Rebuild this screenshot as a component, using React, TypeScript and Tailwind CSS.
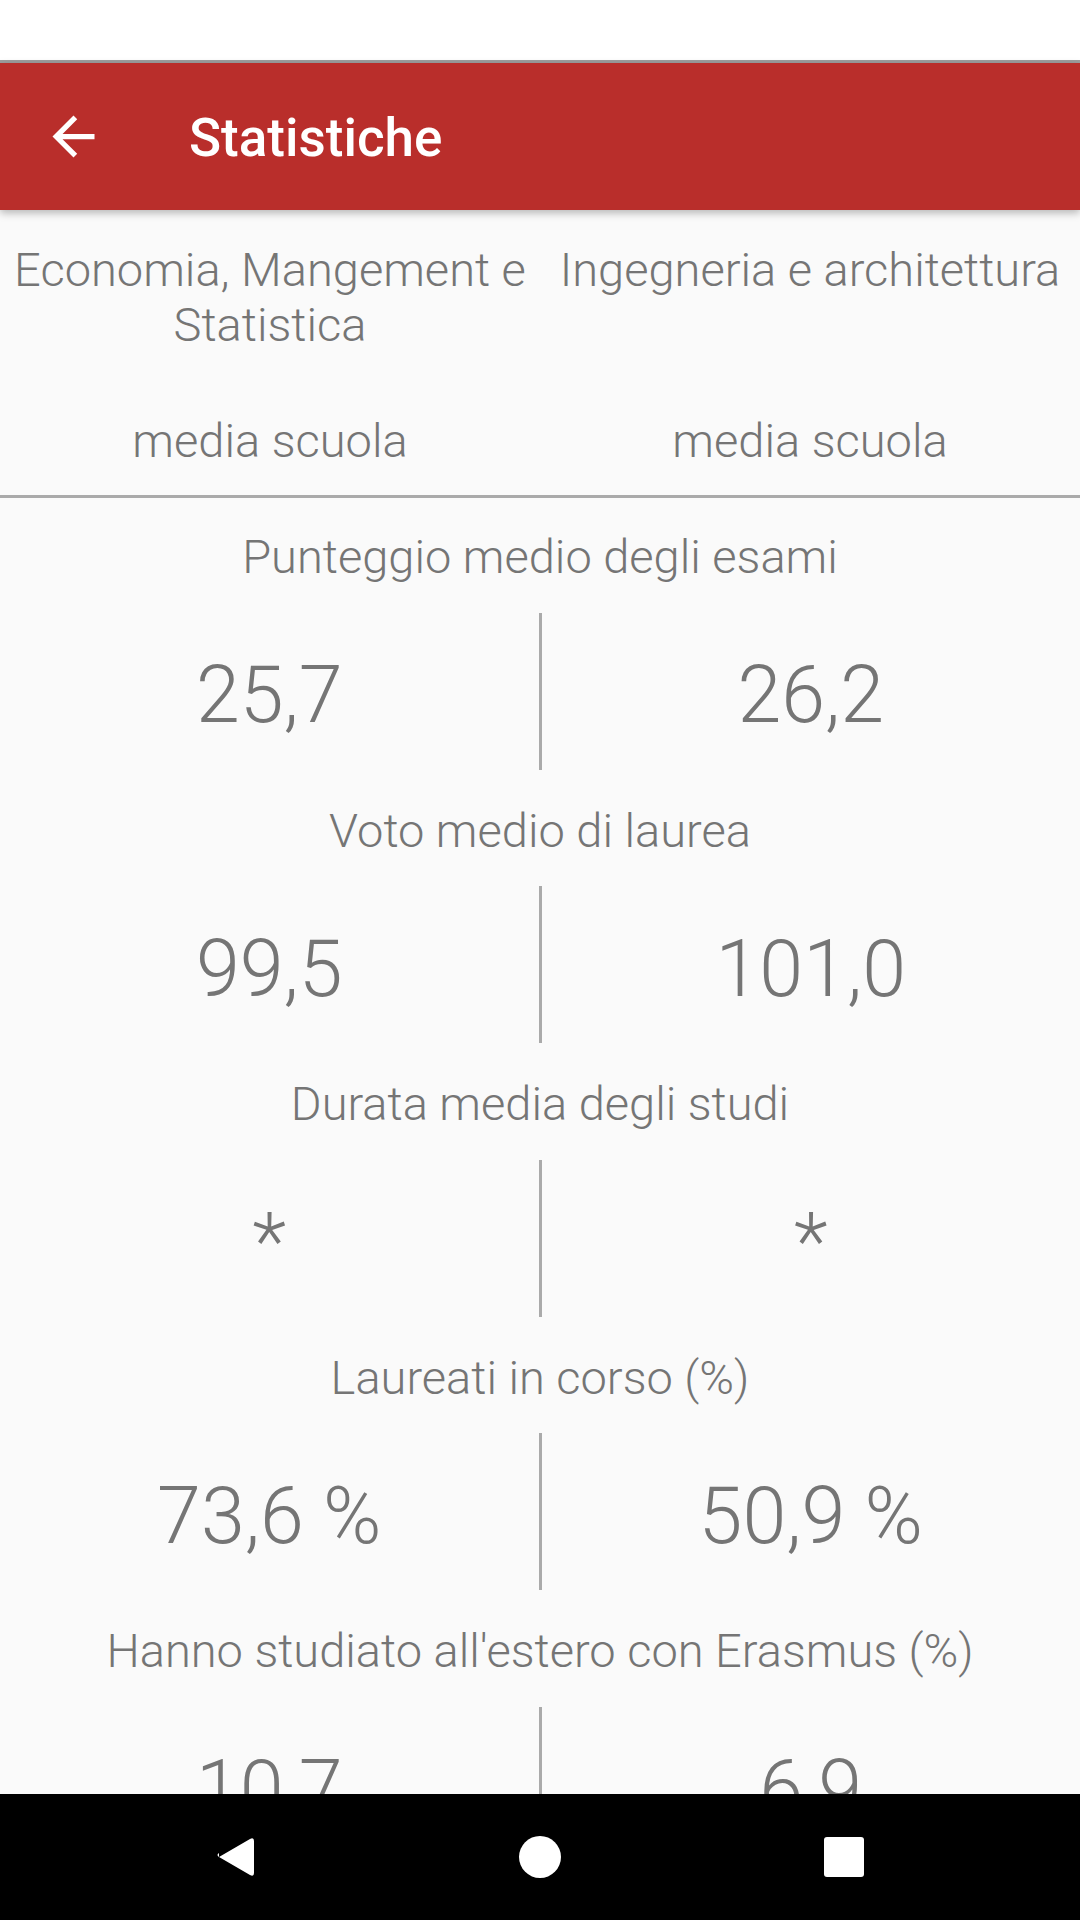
const stats = [
  { label: "Punteggio medio degli esami", left: "25,7", right: "26,2" },
  { label: "Voto medio di laurea", left: "99,5", right: "101,0" },
  { label: "Durata media degli studi", left: "*", right: "*" },
  { label: "Laureati in corso (%)", left: "73,6 %", right: "50,9 %" },
  { label: "Hanno studiato all'estero con Erasmus (%)", left: "10,7", right: "6,9" },
];

function BackArrow() {
  return (
    <svg viewBox="0 0 24 24" className="h-[63px] w-[63px]" fill="white">
      <path d="M20 11H7.83l5.59-5.59L12 4l-8 8 8 8 1.41-1.41L7.83 13H20v-2z" />
    </svg>
  );
}

export default function App() {
  return (
    <div className="relative flex h-[1920px] w-[1080px] flex-col overflow-hidden bg-[#fafafa] font-['Roboto',sans-serif] text-[#757575]">
      <div className="h-[60px] shrink-0 bg-white" />
      <div className="h-[3px] shrink-0 bg-[#9e9e9e]" />

      <header className="relative z-10 flex h-[147px] shrink-0 items-center bg-[#b92e2b] shadow-[0_3px_8px_rgba(0,0,0,0.28)]">
        <div className="ml-[42px] flex items-center">
          <BackArrow />
        </div>
        <h1 className="ml-[84px] pt-[4px] text-[53px] font-medium text-white">Statistiche</h1>
      </header>

      <main className="min-h-0 flex-1 overflow-hidden">
        <div className="grid grid-cols-2 pt-[32px] text-center text-[47px] font-light leading-[55px]">
          <div className="px-[14px]">Economia, Mangement e Statistica</div>
          <div className="px-[14px]">Ingegneria e architettura</div>
          <div className="mt-[61px]">media scuola</div>
          <div className="mt-[61px]">media scuola</div>
        </div>

        <div className="mt-[26.5px] h-[3px] bg-[#aaaaaa]" />

        {stats.map((s, i) => (
          <section key={s.label} className={i === 0 ? "pt-[31.5px]" : "pt-[33px]"}>
            <p className="text-center text-[47px] font-light leading-[55px]">{s.label}</p>
            <div className="mt-[28.5px] flex h-[157px]">
              <div className="flex flex-1 items-center justify-center pt-[9px] text-[79px] font-light">
                {s.left}
              </div>
              <div className="w-[3px] bg-[#aaaaaa]" />
              <div className="flex flex-1 items-center justify-center pt-[9px] text-[79px] font-light">
                {s.right}
              </div>
            </div>
          </section>
        ))}
      </main>

      <nav className="flex h-[126px] shrink-0 items-center bg-black">
        <svg viewBox="0 0 1080 126" className="h-[126px] w-[1080px]">
          <path
            d="M219 65 L250 47 Q254 45 254 49 L254 81 Q254 85 250 83 L219 65 Q216 63 219 61 Z"
            fill="white"
            transform="translate(0 -2)"
          />
          <ellipse cx="540" cy="63" rx="21" ry="21" fill="white" />
          <rect x="824" y="43" width="40" height="40" rx="3" fill="white" />
        </svg>
      </nav>
    </div>
  );
}
